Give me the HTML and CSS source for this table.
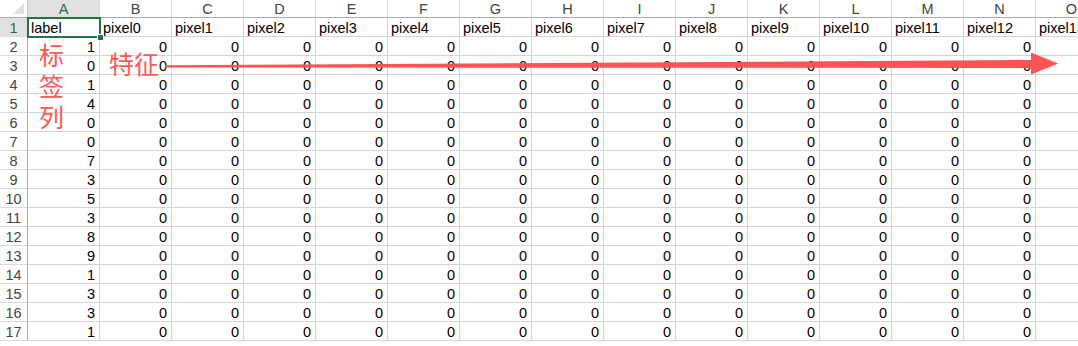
FILE: index.html
```html
<!DOCTYPE html>
<html lang="zh">
<head>
<meta charset="utf-8">
<title>sheet</title>
<link rel="stylesheet" href="styles.css">
</head>
<body>
<div class="wrap">
<div class="sheet">
<span class="corner"><i class="tri"></i></span><span class="ch sel">A</span><span class="ch">B</span><span class="ch">C</span><span class="ch">D</span><span class="ch">E</span><span class="ch">F</span><span class="ch">G</span><span class="ch">H</span><span class="ch">I</span><span class="ch">J</span><span class="ch">K</span><span class="ch">L</span><span class="ch">M</span><span class="ch">N</span><span class="ch">O</span>
<span class="rh sel">1</span><span class="c t">label</span><span class="c t">pixel0</span><span class="c t">pixel1</span><span class="c t">pixel2</span><span class="c t">pixel3</span><span class="c t">pixel4</span><span class="c t">pixel5</span><span class="c t">pixel6</span><span class="c t">pixel7</span><span class="c t">pixel8</span><span class="c t">pixel9</span><span class="c t">pixel10</span><span class="c t">pixel11</span><span class="c t">pixel12</span><span class="c t">pixel13</span>
<span class="rh">2</span><span class="c">1</span><span class="c">0</span><span class="c">0</span><span class="c">0</span><span class="c">0</span><span class="c">0</span><span class="c">0</span><span class="c">0</span><span class="c">0</span><span class="c">0</span><span class="c">0</span><span class="c">0</span><span class="c">0</span><span class="c">0</span><span class="c"></span>
<span class="rh">3</span><span class="c">0</span><span class="c">0</span><span class="c">0</span><span class="c">0</span><span class="c">0</span><span class="c">0</span><span class="c">0</span><span class="c">0</span><span class="c">0</span><span class="c">0</span><span class="c">0</span><span class="c">0</span><span class="c">0</span><span class="c">0</span><span class="c"></span>
<span class="rh">4</span><span class="c">1</span><span class="c">0</span><span class="c">0</span><span class="c">0</span><span class="c">0</span><span class="c">0</span><span class="c">0</span><span class="c">0</span><span class="c">0</span><span class="c">0</span><span class="c">0</span><span class="c">0</span><span class="c">0</span><span class="c">0</span><span class="c"></span>
<span class="rh">5</span><span class="c">4</span><span class="c">0</span><span class="c">0</span><span class="c">0</span><span class="c">0</span><span class="c">0</span><span class="c">0</span><span class="c">0</span><span class="c">0</span><span class="c">0</span><span class="c">0</span><span class="c">0</span><span class="c">0</span><span class="c">0</span><span class="c"></span>
<span class="rh">6</span><span class="c">0</span><span class="c">0</span><span class="c">0</span><span class="c">0</span><span class="c">0</span><span class="c">0</span><span class="c">0</span><span class="c">0</span><span class="c">0</span><span class="c">0</span><span class="c">0</span><span class="c">0</span><span class="c">0</span><span class="c">0</span><span class="c"></span>
<span class="rh">7</span><span class="c">0</span><span class="c">0</span><span class="c">0</span><span class="c">0</span><span class="c">0</span><span class="c">0</span><span class="c">0</span><span class="c">0</span><span class="c">0</span><span class="c">0</span><span class="c">0</span><span class="c">0</span><span class="c">0</span><span class="c">0</span><span class="c"></span>
<span class="rh">8</span><span class="c">7</span><span class="c">0</span><span class="c">0</span><span class="c">0</span><span class="c">0</span><span class="c">0</span><span class="c">0</span><span class="c">0</span><span class="c">0</span><span class="c">0</span><span class="c">0</span><span class="c">0</span><span class="c">0</span><span class="c">0</span><span class="c"></span>
<span class="rh">9</span><span class="c">3</span><span class="c">0</span><span class="c">0</span><span class="c">0</span><span class="c">0</span><span class="c">0</span><span class="c">0</span><span class="c">0</span><span class="c">0</span><span class="c">0</span><span class="c">0</span><span class="c">0</span><span class="c">0</span><span class="c">0</span><span class="c"></span>
<span class="rh">10</span><span class="c">5</span><span class="c">0</span><span class="c">0</span><span class="c">0</span><span class="c">0</span><span class="c">0</span><span class="c">0</span><span class="c">0</span><span class="c">0</span><span class="c">0</span><span class="c">0</span><span class="c">0</span><span class="c">0</span><span class="c">0</span><span class="c"></span>
<span class="rh">11</span><span class="c">3</span><span class="c">0</span><span class="c">0</span><span class="c">0</span><span class="c">0</span><span class="c">0</span><span class="c">0</span><span class="c">0</span><span class="c">0</span><span class="c">0</span><span class="c">0</span><span class="c">0</span><span class="c">0</span><span class="c">0</span><span class="c"></span>
<span class="rh">12</span><span class="c">8</span><span class="c">0</span><span class="c">0</span><span class="c">0</span><span class="c">0</span><span class="c">0</span><span class="c">0</span><span class="c">0</span><span class="c">0</span><span class="c">0</span><span class="c">0</span><span class="c">0</span><span class="c">0</span><span class="c">0</span><span class="c"></span>
<span class="rh">13</span><span class="c">9</span><span class="c">0</span><span class="c">0</span><span class="c">0</span><span class="c">0</span><span class="c">0</span><span class="c">0</span><span class="c">0</span><span class="c">0</span><span class="c">0</span><span class="c">0</span><span class="c">0</span><span class="c">0</span><span class="c">0</span><span class="c"></span>
<span class="rh">14</span><span class="c">1</span><span class="c">0</span><span class="c">0</span><span class="c">0</span><span class="c">0</span><span class="c">0</span><span class="c">0</span><span class="c">0</span><span class="c">0</span><span class="c">0</span><span class="c">0</span><span class="c">0</span><span class="c">0</span><span class="c">0</span><span class="c"></span>
<span class="rh">15</span><span class="c">3</span><span class="c">0</span><span class="c">0</span><span class="c">0</span><span class="c">0</span><span class="c">0</span><span class="c">0</span><span class="c">0</span><span class="c">0</span><span class="c">0</span><span class="c">0</span><span class="c">0</span><span class="c">0</span><span class="c">0</span><span class="c"></span>
<span class="rh">16</span><span class="c">3</span><span class="c">0</span><span class="c">0</span><span class="c">0</span><span class="c">0</span><span class="c">0</span><span class="c">0</span><span class="c">0</span><span class="c">0</span><span class="c">0</span><span class="c">0</span><span class="c">0</span><span class="c">0</span><span class="c">0</span><span class="c"></span>
<span class="rh">17</span><span class="c">1</span><span class="c">0</span><span class="c">0</span><span class="c">0</span><span class="c">0</span><span class="c">0</span><span class="c">0</span><span class="c">0</span><span class="c">0</span><span class="c">0</span><span class="c">0</span><span class="c">0</span><span class="c">0</span><span class="c">0</span><span class="c"></span>
</div>
<div class="selbox"><i class="handle"></i></div>
<div class="note-label">标<br>签<br>列</div>
<div class="note-feat">特征</div>
<svg class="arrow" width="1078" height="346" viewBox="0 0 1078 346" xmlns="http://www.w3.org/2000/svg">
<polygon points="165,65.3 1033,60 1033,68 165,67.5" fill="#fd5353"/>
<polygon points="1031,52.5 1058,63.5 1031,74.5" fill="#fd5353"/>
</svg>
</div>
</body>
</html>
```
FILE: styles.css
```css
html, body {
  margin: 0;
  padding: 0;
  background: #ffffff;
  overflow: hidden;
}
.wrap {
  position: relative;
  width: 1078px;
  height: 346px;
  overflow: hidden;
}
.sheet {
  display: grid;
  grid-template-columns: 28px repeat(15, 72px);
  grid-template-rows: 18px repeat(17, 19px);
  width: 1108px;
  font-family: "Liberation Sans", Arial, sans-serif;
  font-size: 14.5px;
  color: #000000;
}
.sheet > span {
  box-sizing: border-box;
  border-right: 1px solid #d4d4d4;
  border-bottom: 1px solid #d4d4d4;
  white-space: nowrap;
  overflow: hidden;
  line-height: 19px;
}
.corner {
  position: relative;
  background: #ffffff;
  border-right-color: #c8c8c8 !important;
  border-bottom-color: #ababab !important;
}
.tri {
  position: absolute;
  right: 3px;
  bottom: 3px;
  width: 0;
  height: 0;
  border-left: 11px solid transparent;
  border-bottom: 11px solid #dfdfdf;
}
.ch {
  text-align: center;
  color: #444444;
  line-height: 18px !important;
  border-right-color: #dadada !important;
  border-bottom-color: #ababab !important;
}
.rh {
  text-align: center;
  color: #444444;
  border-right-color: #ababab !important;
  border-bottom-color: #dadada !important;
  padding-top: 1px;
}
.sel {
  background: #e1e1e1;
  color: #217346 !important;
}
.c {
  text-align: right;
  padding-right: 4px;
  padding-top: 1px;
}
.c.t {
  text-align: left;
  padding-left: 3px;
  padding-right: 0;
  overflow: visible;
}
.selbox {
  position: absolute;
  left: 27px;
  top: 17px;
  width: 70px;
  height: 17px;
  border: 2px solid #217346;
}
.handle {
  position: absolute;
  right: -5px;
  bottom: -5px;
  width: 5px;
  height: 5px;
  background: #217346;
  border: 1px solid #ffffff;
}
.note-label {
  position: absolute;
  left: 39px;
  top: 39px;
  font-family: "Noto Sans CJK SC", sans-serif;
  font-size: 25px;
  line-height: 31px;
  color: #fc5a5a;
}
.note-feat {
  position: absolute;
  left: 109px;
  top: 47px;
  font-family: "Noto Sans CJK SC", sans-serif;
  font-size: 25px;
  line-height: 32px;
  color: #fc5a5a;
}
.arrow {
  position: absolute;
  left: 0;
  top: 0;
}
```
